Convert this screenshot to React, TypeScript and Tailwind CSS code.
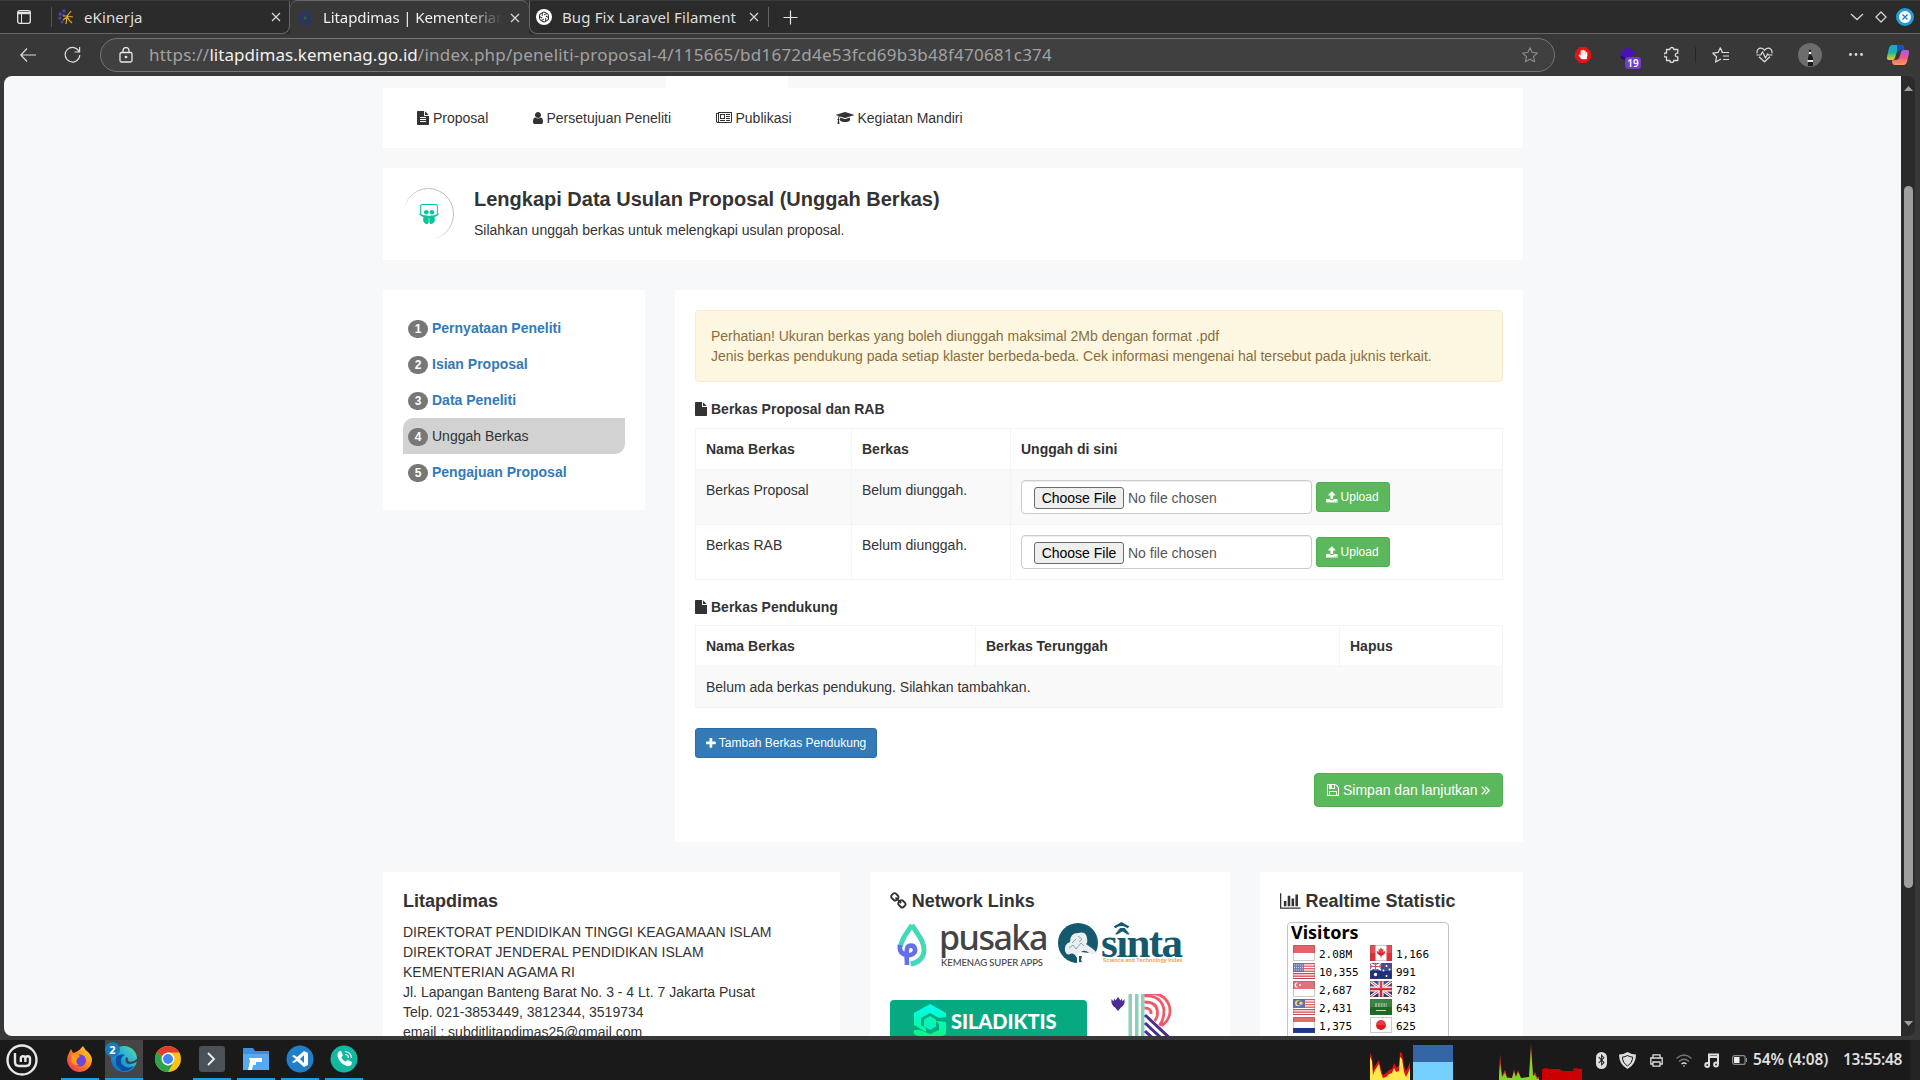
import React from 'react';
import { FaSlideshare, FaHandPaper, FaBluetoothB } from 'react-icons/fa';

type Glyph = { d: string; box: string; w: number };

const GLYPHS: Record<string, Glyph> = {
  fileText: {
    w: 12,
    box: '128 0 1536 1792',
    d: 'M1596 476q14 14 28 36h-472v-472q22 14 36 28zm-476 164h544v1056q0 40-28 68t-68 28h-1344q-40 0-68-28t-28-68v-1600q0-40 28-68t68-28h800v544q0 40 28 68t68 28zm160 736v-64q0-14-9-23t-23-9h-704q-14 0-23 9t-9 23v64q0 14 9 23t23 9h704q14 0 23-9t9-23zm0-256v-64q0-14-9-23t-23-9h-704q-14 0-23 9t-9 23v64q0 14 9 23t23 9h704q14 0 23-9t9-23zm0-256v-64q0-14-9-23t-23-9h-704q-14 0-23 9t-9 23v64q0 14 9 23t23 9h704q14 0 23-9t9-23z',
  },
  file: {
    w: 12,
    box: '128 0 1536 1792',
    d: 'M1152 512v-472q22 14 36 28l408 408q14 14 28 36h-472zm-128 32q0 40 28 68t68 28h544v1056q0 40-28 68t-68 28h-1344q-40 0-68-28t-28-68v-1600q0-40 28-68t68-28h800v544z',
  },
  user: {
    w: 10,
    box: '256 0 1280 1792',
    d: 'M1536 1399q0 109-62.5 187t-150.5 78h-854q-88 0-150.5-78t-62.5-187q0-85 8.5-160.5t31.5-152 58.5-131 94-89 134.5-34.5q131 128 313 128t313-128q76 0 134.5 34.5t94 89 58.5 131 31.5 152 8.5 160.5zm-256-887q0 159-112.5 271.5t-271.5 112.5-271.5-112.5-112.5-271.5 112.5-271.5 271.5-112.5 271.5 112.5 112.5 271.5z',
  },
  news: {
    w: 16,
    box: '0 0 2048 1792',
    d: 'M1024 512h-384v384h384v-384zm128 640v128h-640v-128h640zm0-768v640h-640v-640h640zm640 768v128h-512v-128h512zm0-256v128h-512v-128h512zm0-256v128h-512v-128h512zm0-256v128h-512v-128h512zm-1536 960v-960h-128v960q0 26 19 45t45 19 45-19 19-45zm1664 0v-1088h-1536v1088q0 33-11 64h1483q26 0 45-19t19-45zm128-1216v1216q0 80-56 136t-136 56h-1664q-80 0-136-56t-56-136v-1088h256v-128h1792z',
  },
  cap: {
    w: 18,
    box: '0 0 2304 1792',
    d: 'M1774 836l18 316q4 69-82 128t-235 93.5-323 34.5-323-34.5-235-93.5-82-128l18-316 574 181q22 7 48 7t48-7zm530-324q0 23-22 31l-1120 352q-4 1-10 1t-10-1l-652-206q-43 34-71 111.5t-34 178.5q63 36 63 109 0 69-58 107l58 433q2 14-8 25-9 11-24 11h-192q-15 0-24-11-10-11-8-25l58-433q-58-38-58-107 0-73 65-111 11-207 98-330l-333-104q-22-8-22-31t22-31l1120-352q4-1 10-1t10 1l1120 352q22 8 22 31z',
  },
  upload: {
    w: 13,
    box: '64 0 1664 1792',
    d: 'M1344 1472q0-26-19-45t-45-19-45 19-19 45 19 45 45 19 45-19 19-45zm256 0q0-26-19-45t-45-19-45 19-19 45 19 45 45 19 45-19 19-45zm128-224v320q0 40-28 68t-68 28h-1472q-40 0-68-28t-28-68v-320q0-40 28-68t68-28h427q21 56 70.5 92t110.5 36h256q61 0 110.5-36t70.5-92h427q40 0 68 28t28 68zm-325-648q-17 40-59 40h-256v448q0 26-19 45t-45 19h-256q-26 0-45-19t-19-45v-448h-256q-42 0-59-40-17-39 14-69l448-448q18-19 45-19t45 19l448 448q31 30 14 69z',
  },
  plus: {
    w: 11,
    box: '192 0 1408 1792',
    d: 'M1600 736v192q0 40-28 68t-68 28h-416v416q0 40-28 68t-68 28h-192q-40 0-68-28t-28-68v-416h-416q-40 0-68-28t-28-68v-192q0-40 28-68t68-28h416v-416q0-40 28-68t68-28h192q40 0 68 28t28 68v416h416q40 0 68 28t28 68z',
  },
  floppy: {
    w: 12,
    box: '128 0 1536 1792',
    d: 'M512 1536h768v-384h-768v384zm896 0h128v-896q0-14-10-38.5t-20-34.5l-281-281q-10-10-34-20t-39-10v416q0 40-28 68t-68 28h-576q-40 0-68-28t-28-68v-416h-128v1280h128v-416q0-40 28-68t68-28h832q40 0 68 28t28 68v416zm-384-928v-320q0-13-9.5-22.5t-22.5-9.5h-192q-13 0-22.5 9.5t-9.5 22.5v320q0 13 9.5 22.5t22.5 9.5h192q13 0 22.5-9.5t9.5-22.5zm640 32v928q0 40-28 68t-68 28h-1344q-40 0-68-28t-28-68v-1344q0-40 28-68t68-28h928q40 0 88 20t76 48l280 280q28 28 48 76t20 88z',
  },
  link: {
    w: 13,
    box: '64 0 1664 1792',
    d: 'M1520 1216q0-40-28-68l-208-208q-28-28-68-28-42 0-72 32 3 3 19 18.5t21.5 21.5 15 19 13 25.5 3.5 27.5q0 40-28 68t-68 28q-15 0-27.5-3.5t-25.5-13-19-15-21.5-21.5-18.5-19q-33 31-33 73 0 40 28 68l206 207q27 27 68 27 40 0 68-26l147-146q28-28 28-67zm-703-705q0-40-28-68l-206-207q-28-28-68-28-39 0-68 27l-147 146q-28 28-28 67 0 40 28 68l208 208q27 27 68 27 42 0 72-31-3-3-19-18.5t-21.5-21.5-15-19-13-25.5-3.5-27.5q0-40 28-68t68-28q15 0 27.5 3.5t25.5 13 19 15 21.5 21.5 18.5 19q33-31 33-73zm895 705q0 120-85 203l-147 146q-83 83-203 83-121 0-204-85l-206-207q-83-83-83-203 0-123 88-209l-88-88q-86 88-208 88-120 0-204-84l-208-208q-84-84-84-204t85-203l147-146q83-83 203-83 121 0 204 85l206 207q83 83 83 203 0 123-88 209l88 88q86-88 208-88 120 0 204 84l208 208q84 84 84 204z',
  },
  chart: {
    w: 16,
    box: '0 0 2048 1792',
    d: 'M640 896v512h-256v-512h256zm384-512v1024h-256v-1024h256zm1024 1152v128h-2048v-1536h128v1408h1920zm-640-896v768h-256v-768h256zm384-384v1152h-256v-1152h256z',
  },
};

function Icon({ name, size = 14, className = '' }: { name: string; size?: number; className?: string }) {
  const g = GLYPHS[name];
  return (
    <svg viewBox={g.box} width={(g.w * size) / 14} height={size} fill="currentColor" className={className}>
      <path d={g.d} />
    </svg>
  );
}

function CloseX() {
  return (
    <svg width="10" height="10" viewBox="0 0 10 10" stroke="#d8d8d8" strokeWidth="1.2">
      <path d="M1 1l8 8M9 1l-8 8" />
    </svg>
  );
}

const uiFont = "font-['Noto_Sans',sans-serif]";

function TabStrip() {
  return (
    <div className={`flex h-[34px] border-t border-[#3a3a3a] bg-[#2b2b2b] text-[15px] text-[#dedede] ${uiFont}`}>
      <div className="flex w-[51px] items-center border-b border-[#666] pl-[17px]">
        <svg width="14" height="14" viewBox="0 0 14 14" fill="none" stroke="#e4e4e4" strokeWidth="1.3">
          <rect x=".7" y=".7" width="12.6" height="12.6" rx="2" />
          <path d="M.7 3h12.6" strokeWidth="2.4" />
          <path d="M4.5 4v9" strokeWidth="1" />
        </svg>
      </div>
      <div className="flex w-[239px] items-center rounded-br-lg border-b border-r border-[#666]">
        <div className="h-5 w-px bg-[#555]" />
        <svg className="ml-[6px]" width="16" height="16" viewBox="0 0 16 16">
          <g fill="#4446b0">
            <circle cx="6" cy="2" r="1.8" />
            <circle cx="2.2" cy="5" r="1.8" />
            <circle cx="1.8" cy="9" r="1.6" />
            <circle cx="4" cy="13" r="1.5" />
            <circle cx="5.5" cy="6" r="1.3" />
          </g>
          <path d="M5 7l4 0 4-5M9 7l6 1M9 7l2 4 3 3M9 8l-1 7M9 8l-4 3" stroke="#e3a524" strokeWidth="1.2" fill="none" />
        </svg>
        <span className="ml-[10px] w-[181px] tracking-[0.1px]">eKinerja</span>
        <span className="ml-[6px]"><CloseX /></span>
      </div>
      <div className="flex w-[239px] items-center rounded-t-lg bg-[#383838] pl-[8px] shadow-[0_-1px_0_#666]">
        <svg width="14" height="16" viewBox="0 0 14 16" fill="none" stroke="#23357e" strokeWidth="1.6">
          <path d="M7 1l5.5 4v6L7 15l-5.5-4V5z" strokeDasharray="2 1" />
          <circle cx="7" cy="8" r="3" />
          <circle cx="7" cy="8" r="1.5" fill="#1d6c34" stroke="none" />
        </svg>
        <span className="ml-[11px] w-[179px] overflow-hidden whitespace-nowrap tracking-[-0.1px] text-[#f0f0f0] [mask-image:linear-gradient(to_right,#000_82%,transparent)]">
          Litapdimas | Kementerian
        </span>
        <span className="ml-[8px]"><CloseX /></span>
      </div>
      <div className="flex flex-1 items-center rounded-bl-lg border-b border-l border-[#666]">
        <svg className="ml-[6px]" width="16" height="16" viewBox="0 0 16 16" fill="none" stroke="#222" strokeWidth=".9">
          <circle cx="8" cy="8" r="8" fill="#fff" stroke="none" />
          {[0, 60, 120, 180, 240, 300].map((a) => (
            <path key={a} transform={`rotate(${a} 8 8)`} d="M8 6l2-1.2q2.5-.8 2.5 2.2v2" />
          ))}
        </svg>
        <span className="ml-[10px] w-[177px] whitespace-nowrap tracking-[0.12px]">Bug Fix Laravel Filament</span>
        <span className="ml-[10px]"><CloseX /></span>
        <div className="ml-[9px] h-5 w-px bg-[#666]" />
        <svg className="ml-[14px]" width="15" height="15" viewBox="0 0 15 15" stroke="#e6e6e6" strokeWidth="1.2">
          <path d="M7.5.5v14M.5 7.5h14" />
        </svg>
        <div className="ml-auto flex items-center">
          <svg width="14" height="8" viewBox="0 0 14 8" fill="none" stroke="#d4d4d4" strokeWidth="1.3">
            <path d="M1 1l6 5.5 6-5.5" />
          </svg>
          <svg className="ml-[11px]" width="12" height="12" viewBox="0 0 12 12" fill="none" stroke="#d4d4d4" strokeWidth="1.3">
            <path d="M6 1l5 5-5 5-5-5z" />
          </svg>
          <svg className="mr-[6px] ml-[9px]" width="18" height="18" viewBox="0 0 18 18">
            <circle cx="9" cy="9" r="9" fill="#1f9fdd" />
            <circle cx="9" cy="9" r="6" fill="#fff" />
            <path d="M6.5 6.5l5 5M11.5 6.5l-5 5" stroke="#1f7fbd" strokeWidth="1.4" />
          </svg>
        </div>
      </div>
    </div>
  );
}

function Toolbar() {
  return (
    <div className="flex h-[42px] items-center bg-[#383838] pb-px text-[#dcdcdc]">
      <svg className="ml-[20px]" width="16" height="14" viewBox="0 0 16 14" fill="none" stroke="#dcdcdc" strokeWidth="1.2">
        <path d="M7 .5L.8 7 7 13.5M1 7h15" />
      </svg>
      <svg className="ml-[28px]" width="17" height="17" viewBox="0 0 17 17" fill="none" stroke="#dcdcdc" strokeWidth="1.2">
        <path d="M15.300 6A7.300 7.300 0 1 0 15.800 9M15.600 1v5h-5" />
      </svg>
      <div className="ml-[19px] flex h-[34px] w-[1455px] items-center rounded-full border border-[#757575] bg-[#404040]">
        <svg className="ml-[18px]" width="14" height="16" viewBox="0 0 14 16" fill="none" stroke="#e8e8e8" strokeWidth="1.3">
          <rect x="1" y="5.5" width="12" height="9.5" rx="1.5" />
          <path d="M4 5.500V3.500a3 3 0 0 1 6 0v2" />
          <circle cx="7" cy="10" r=".7" fill="#e8e8e8" />
        </svg>
        <span className={`ml-[16px] whitespace-nowrap text-[17px] tracking-[0.23px] text-[#a2a2a2] ${uiFont}`}>
          https://<span className="tracking-[0.05px] text-[#f0f0f0]">litapdimas.kemenag.go.id</span>
          /index.php/peneliti-proposal-4/115665/bd1672d4e53fcd69b3b48f470681c374
        </span>
        <svg className="mr-[16px] ml-auto" width="16" height="16" viewBox="0 0 16 16" fill="none" stroke="#8c8c8c" strokeWidth="1.1" strokeLinejoin="round">
          <path d="M8 .8l2.200 4.700 5.200.6-3.900 3.500 1.100 5.200L8 12.200l-4.600 2.600 1.100-5.200L.6 6.100l5.200-.6z" />
        </svg>
      </div>
      <svg className="ml-[20px]" width="16" height="16" viewBox="0 0 16 16">
        <path d="M4.700 0h6.600L16 4.700v6.600L11.300 16H4.700L0 11.300V4.700z" fill="#e01414" />
        <FaHandPaper x="3" y="2.500" size={10} color="#fff" />
      </svg>
      <div className="relative ml-[28px] h-6 w-[22px]">
        <svg width="17" height="16" viewBox="0 0 17 16" className="mt-1">
          <path d="M8.500 0L17 6l-8.500 6L0 6z" fill="#4a12b4" />
          <path d="M1.500 8v3l5 3v-3z" fill="#2d0878" />
        </svg>
        <span className={`absolute top-[14px] left-[6px] h-3 w-4 rounded-[3px] bg-[#6f3fc8] text-center text-[10px] leading-3 font-semibold text-white ${uiFont}`}>
          19
        </span>
      </div>
      <svg className="ml-[23px]" width="16" height="17" viewBox="0 0 16 17" fill="none" stroke="#dcdcdc" strokeWidth="1.3">
        <path d="M2.500 3.500h3.300a2 2 0 1 1 4 0h4v3.700a1.900 1.900 0 1 0 0 3.600v3.700h-4a2 2 0 0 1-4 0H2.500v-3.700a2 2 0 1 1 0-3.600z" strokeLinejoin="round" />
      </svg>
      <div className="ml-[15px] h-4 w-px bg-[#262626]" />
      <svg className="ml-[16px]" width="17" height="16" viewBox="0 0 17 16" fill="none" stroke="#dcdcdc" strokeWidth="1.2" strokeLinejoin="round">
        <path d="M10.500 5.400L8.300.8 6.100 5.400.8 6.200l3.700 3.600-.9 5.300L9 12M9.500 5.500H17M11 9h6M11 12.500h6" />
      </svg>
      <svg className="ml-[27px]" width="17" height="16" viewBox="0 0 17 16" fill="none" stroke="#dcdcdc" strokeWidth="1.2" strokeLinejoin="round">
        <path d="M1.200 6.300C.2 3 3 .8 5.200 1.100 7 1.300 8 2.600 8.500 3.300 9 2.600 10 1.300 11.800 1.100c2.200-.3 5 1.900 4 5.200M3 9.800l5.500 5 5.500-5M.5 8h4.200L6.500 4.800l3 6.200L11.500 7l1 1h4" />
      </svg>
      <svg className="ml-[25px]" width="24" height="24" viewBox="0 0 24 24">
        <circle cx="12" cy="12" r="12" fill="#6d6d6d" />
        <path d="M11 7q1-1 2 0v4l2 4v8h-5v-8l1-4z" fill="#1c1c1c" />
        <path d="M9.500 17h5.500v2H9.500z" fill="#e8e8e8" />
        <circle cx="12" cy="10" r="1.2" fill="#fff" />
      </svg>
      <svg className="ml-[27px]" width="14" height="3" viewBox="0 0 14 3" fill="#e0e0e0">
        <circle cx="1.5" cy="1.5" r="1.4" /><circle cx="7" cy="1.5" r="1.4" /><circle cx="12.5" cy="1.5" r="1.4" />
      </svg>
      <svg className="ml-[24px]" width="22" height="20" viewBox="0 0 22 20">
        <defs>
          <linearGradient id="cpA" x1="0" y1="0" x2="0" y2="1"><stop offset="0" stopColor="#1f9bf0" /><stop offset=".5" stopColor="#1fb59a" /><stop offset="1" stopColor="#f2cf1a" /></linearGradient>
          <linearGradient id="cpB" x1="0" y1="0" x2="0" y2="1"><stop offset="0" stopColor="#a45cf0" /><stop offset=".5" stopColor="#f0558c" /><stop offset="1" stopColor="#ff9a55" /></linearGradient>
        </defs>
        <path d="M5 0h9q2.500 0 3 3l-.5 2h-3Q10.500 5 9.500 8l-1.500 5Q7.500 15 5.500 15H2Q-.5 15 0 12L2 3Q3 0 5 0z" fill="url(#cpA)" />
        <path d="M17 20H8q-2.500 0-3-3l.5-2h3q3 0 4-3L14 7Q14.500 5 16.500 5H20q2.500 0 2 3l-2 9q-1 3-3 3z" fill="url(#cpB)" />
        <path d="M10 0h4q2.500 0 3 3l.5 2h-4Q11 5 10 7z" fill="#1a50c0" />
      </svg>
    </div>
  );
}

const NAV: { icon: string; label: string; w: string }[] = [
  { icon: 'fileText', label: 'Proposal', w: 'w-[115.5px]' },
  { icon: 'user', label: 'Persetujuan Peneliti', w: 'w-[183px]' },
  { icon: 'news', label: 'Publikasi', w: 'w-[120px]' },
  { icon: 'cap', label: 'Kegiatan Mandiri', w: 'w-[140px]' },
];

const STEPS = ['Pernyataan Peneliti', 'Isian Proposal', 'Data Peneliti', 'Unggah Berkas', 'Pengajuan Proposal'];

function Steps() {
  return (
    <div className="h-[220px] w-[262px] bg-white p-5">
      {STEPS.map((s, i) => (
        <div
          key={s}
          className={
            i === 3
              ? 'flex h-9 items-center rounded-tl-[10px] rounded-br-[10px] bg-[#d2d2d2] pl-[5px]'
              : 'flex h-9 items-center pl-[5px] font-bold text-[#337ab7]'
          }
        >
          <span className="mt-[2px] h-[18px] w-5 rounded-[10px] bg-[#777] text-center text-[12px] leading-[18px] font-bold text-white">
            {i + 1}
          </span>
          <span className="ml-1">{s}</span>
        </div>
      ))}
    </div>
  );
}

const cell = 'border border-[#f4f4f4] p-[10px] text-left align-top';

function UploadRow({ name, shade }: { name: string; shade?: boolean }) {
  return (
    <tr className={shade ? 'bg-[#f9f9f9]' : ''}>
      <td className={cell}>{name}</td>
      <td className={cell}>Belum diunggah.</td>
      <td className={cell}>
        <div className="flex items-center gap-1">
          <div className="flex h-[34px] w-[291px] items-center rounded border border-[#ccc] bg-white pt-px pl-3 text-[#555] shadow-[inset_0_1px_1px_rgba(0,0,0,.075)]">
            <span className="h-[22px] w-[90px] rounded-[3px] border border-[#6b6b6b] bg-[#efefef] text-center leading-[21px] whitespace-nowrap text-black">Choose File</span>
            <span className="ml-1">No file chosen</span>
          </div>
          <button className="flex h-[30px] w-[74px] items-center rounded-[3px] border border-[#4cae4c] bg-[#5cb85c] pl-[9px] text-[12px] text-white">
            <Icon name="upload" size={12.5} />
            <span className="ml-[3px]">Upload</span>
          </button>
        </div>
      </td>
    </tr>
  );
}

function UploadPanel() {
  return (
    <div className="h-[552px] w-[848px] bg-white p-5">
      <div className="h-[72px] rounded border border-[#faebcc] bg-[#fdf7e2] px-[15px] pt-[15px] text-[#8a6d3b]">
        <p>Perhatian! Ukuran berkas yang boleh diunggah maksimal 2Mb dengan format .pdf</p>
        <p>Jenis berkas pendukung pada setiap klaster berbeda-beda. Cek informasi mengenai hal tersebut pada juknis terkait.</p>
      </div>
      <h5 className="mt-[17px] flex h-5 items-center font-bold">
        <Icon name="file" className="mr-1" /> Berkas Proposal dan RAB
      </h5>
      <table className="mt-[9px] w-full table-fixed border-collapse">
        <colgroup><col className="w-[156px]" /><col className="w-[159px]" /><col /></colgroup>
        <tbody>
          <tr><th className={cell}>Nama Berkas</th><th className={cell}>Berkas</th><th className={cell}>Unggah di sini</th></tr>
          <UploadRow name="Berkas Proposal" shade />
          <UploadRow name="Berkas RAB" />
        </tbody>
      </table>
      <h5 className="mt-[17px] flex h-5 items-center font-bold">
        <Icon name="file" className="mr-1" /> Berkas Pendukung
      </h5>
      <table className="mt-2 w-full table-fixed border-collapse">
        <colgroup><col className="w-[280px]" /><col className="w-[364px]" /><col /></colgroup>
        <tbody>
          <tr><th className={cell}>Nama Berkas</th><th className={cell}>Berkas Terunggah</th><th className={cell}>Hapus</th></tr>
          <tr className="bg-[#f9f9f9]"><td className={cell} colSpan={3}>Belum ada berkas pendukung. Silahkan tambahkan.</td></tr>
        </tbody>
      </table>
      <button className="mt-5 flex h-[30px] w-[182px] items-center rounded-[3px] border border-[#2e6da4] bg-[#337ab7] pl-[10px] text-[12px] text-white">
        <Icon name="plus" size={12.5} />
        <span className="ml-[3px] whitespace-nowrap">Tambah Berkas Pendukung</span>
      </button>
      <div className="mt-[15px] flex justify-end">
        <button className="flex h-[34px] w-[189px] items-center rounded border border-[#4cae4c] bg-[#5cb85c] pl-3 text-white">
          <Icon name="floppy" />
          <span className="ml-1 whitespace-nowrap">Simpan dan lanjutkan</span>
          <svg className="ml-[3px]" width="9" height="9" viewBox="0 0 9 9" fill="none" stroke="#fff" strokeWidth="1.3">
            <path d="M.8.8l3.700 3.700-3.700 3.700M4.500.8l3.700 3.700-3.700 3.700" />
          </svg>
        </button>
      </div>
    </div>
  );
}

function PusakaLogo() {
  return (
    <div className="flex">
      <svg className="mt-[1px]" width="30" height="46" viewBox="0 0 30 46" fill="none" strokeWidth="5">
        <path d="M15 4C10 12 4 18 3.500 26M15 4c6 10 12 16 12 25 0 8-6 13-13.500 14" stroke="#43d9b8" />
        <path d="M3 24c-1 6 2 9 6 10s10-1 9-6-8-4-8 0c-1 5 0 10 0 16" stroke="#6470ea" strokeWidth="4.600" />
      </svg>
      <div className="ml-[12px] w-[108px] whitespace-nowrap text-[#444]">
        <div className="h-[38px] font-['Noto_Sans',sans-serif] text-[34px] leading-[35px] font-medium tracking-[-1.5px]">pusaka</div>
        <div className="ml-[2px] font-[Lato,sans-serif] text-[9.5px] leading-[10px] font-medium tracking-[-0.1px]">KEMENAG SUPER APPS</div>
      </div>
    </div>
  );
}

function SintaLogo() {
  return (
    <div className="mt-px flex">
      <svg className="mt-[2px]" width="40" height="40" viewBox="0 0 40 40">
        <circle cx="20" cy="20" r="20" fill="#15596e" />
        <path d="M7 28q-1-7 5-9 0-9 8-9 8-2 9 5 1 5-1 6l7 5q5 4 4 6l-8-2q-4-4-8-1l-4 6q-3-6-7-4-3 2-5-3z" fill="#e9eff1" />
        <path d="M11 25l4-3 3 4 5-6 3 3M20 13l4 3-3 3M14 20l4-4" stroke="#7da0ac" fill="none" strokeWidth=".9" />
        <path d="M19 33q0-3 4-4l16 2q-4 9-18 9h-2z" fill="#fff" />
        <path d="M21 33v6h3l-1-2 1-4z" fill="#15596e" />
      </svg>
      <div className="relative ml-[3px] w-[84px] whitespace-nowrap">
        <svg className="absolute top-[1px] left-[12px]" width="17" height="7" viewBox="0 0 18 8" fill="#15596e">
          <path d="M9 0l9 5-2 2q-7-5-14 0L0 5z" />
        </svg>
        <div className="h-[36px] font-['Liberation_Serif',serif] text-[43px] leading-[44px] font-bold tracking-[-1.6px] text-[#15596e]">sînta</div>
        <div className="ml-[2px] font-[Inter,sans-serif] text-[5.4px] leading-[6px] font-semibold text-[#f7964a]">Science and Technology Index</div>
      </div>
    </div>
  );
}

function Siladiktis() {
  return (
    <div className="mt-[29px] flex h-[60px] w-[197px] rounded bg-[#07aa80] pl-[24px]">
      <svg className="mt-1" width="32" height="40" viewBox="0 0 32 40">
        <defs>
          <linearGradient id="silG" x1="0" y1="0" x2="0" y2="1"><stop offset="0" stopColor="#00fff7" /><stop offset="1" stopColor="#0cf56b" /></linearGradient>
        </defs>
        <path d="M16 0l16 9v4l-7 1-9-5-9 5v7l5 3v4L0 21V9zM32 18v12l-16 9L0 30v-4h6l10 4 9-4v-6l-3-3z" fill="url(#silG)" />
        <path d="M16 12l6 3.500v7L16 26l-6-3.500v-7z" fill="#06f5b4" />
      </svg>
      <span className="mt-[9px] ml-[5px] font-[Lato,sans-serif] text-[20px] leading-[24px] font-black tracking-[-0.05px] text-white">SILADIKTIS</span>
    </div>
  );
}

function RLogo() {
  return (
    <svg className="mt-[23px] ml-[23px]" width="64" height="60" viewBox="0 0 64 60">
      <path d="M8 3l2.500 3.500L12 4.500l.5 3 2-2.500q1 6-4 9L8 17l-2.500-3q-5-3-4-9l2 2.500.5-3 1.500 2z" fill="#4a2d94" />
      <g fill="#8bd0b8"><path d="M18.500 0H22v60h-3.500zM25 0h3.500v60H25zM31 0h3.500v60H31z" /></g>
      <g fill="none" stroke="#f05a6a" strokeWidth="2.800">
        <path d="M34.500 2a17 17 0 0 1 17 29.500M34.500 2q17-1 19.500 14 0 10-4.500 15.500M34.500 8q13 0 13 11 0 5-3 8M34.500 14q7 0 6.500 6" />
      </g>
      <g stroke="#4a2d94" strokeWidth="3"><path d="M35 21l30 28M35 29l28 26M35 37l24 22" /></g>
    </svg>
  );
}

const FLAG_ART: Record<string, React.ReactNode> = {
  id: <><rect width="22" height="16" fill="#fdfdfd" /><rect width="22" height="8" fill="#e2474e" /></>,
  us: (
    <><rect width="22" height="16" fill="#fff" />{[0, 2.5, 5, 7.5, 10, 12.5, 15].map((y) => <rect key={y} y={y} width="22" height="1.3" fill="#e04050" />)}
      <rect width="11" height="9" fill="#5c6ca8" /><path d="M1 2h9M1 4.500h9M1 7h9" stroke="#cfd6ec" strokeDasharray="1 1" strokeWidth=".9" /></>
  ),
  sg: <><rect width="22" height="16" fill="#fdfdfd" /><rect width="22" height="8" fill="#dc5a60" /><circle cx="4" cy="4" r="2.5" fill="#fff" /><circle cx="5.2" cy="4" r="2.2" fill="#dc5a60" /><circle cx="7" cy="4" r="1" fill="#fff" /></>,
  my: (
    <><rect width="22" height="16" fill="#fff" />{[0, 2.5, 5, 7.5, 10, 12.5, 15].map((y) => <rect key={y} y={y} width="22" height="1.3" fill="#dd4a50" />)}
      <rect width="12" height="8.5" fill="#3f5da0" /><circle cx="5" cy="4.2" r="3" fill="#f4d94e" /><circle cx="6.2" cy="4.2" r="2.4" fill="#3f5da0" /><circle cx="8" cy="4.2" r="1.6" fill="#f4d94e" /></>
  ),
  nl: <><rect width="22" height="16" fill="#fdfdfd" /><rect width="22" height="5" fill="#e0545a" /><rect y="11" width="22" height="5" fill="#15398e" /></>,
  ca: <><rect width="22" height="16" fill="#fff" /><rect width="5.5" height="16" fill="#df3038" /><rect x="16.5" width="5.5" height="16" fill="#df3038" /><path d="M11 2.500l1.200 2 1.300-.5-.3 2.700 2.300-.8-.7 2.500-2.800 2.400H11.400v2h-.8v-2H10L7.200 8.400 6.500 5.900l2.300.8L8.500 4l1.300.5z" fill="#df2028" /></>,
  au: <><rect width="22" height="16" fill="#20307c" /><path d="M0 0l11 7M11 0L0 7M5.500 0v7M0 3.500h11" stroke="#fff" strokeWidth="1.8" /><path d="M5.500 0v7M0 3.500h11" stroke="#d8303a" strokeWidth="1" /><g fill="#fff"><circle cx="5.5" cy="11.5" r="1.7" /><circle cx="16.5" cy="3" r="1" /><circle cx="16.5" cy="13" r="1" /><circle cx="13.5" cy="7.5" r="1" /><circle cx="19.5" cy="6.5" r="1" /></g></>,
  gb: <><rect width="22" height="16" fill="#24347e" /><path d="M0 0l22 16M22 0L0 16" stroke="#fff" strokeWidth="3" /><path d="M0 0l22 16M22 0L0 16" stroke="#d8303a" strokeWidth="1" /><path d="M11 0v16M0 8h22" stroke="#fff" strokeWidth="5" /><path d="M11 0v16M0 8h22" stroke="#d8202a" strokeWidth="2.6" /></>,
  sa: <><rect width="22" height="16" fill="#1d6b22" /><path d="M5 5h12M5 7h12" stroke="#cfe2d0" strokeDasharray="2 .8" strokeWidth="1.2" /><path d="M6 11.500h10" stroke="#dfeadf" strokeWidth=".9" /></>,
  jp: <><rect width="22" height="16" fill="#fdfdfd" /><circle cx="11" cy="8" r="5" fill="#e21820" /></>,
};

const VISITORS: [string, string, string, string][] = [
  ['id', '2.08M', 'ca', '1,166'],
  ['us', '10,355', 'au', '991'],
  ['sg', '2,687', 'gb', '782'],
  ['my', '2,431', 'sa', '643'],
  ['nl', '1,375', 'jp', '625'],
];

function Flag({ code }: { code: string }) {
  return (
    <svg width="22" height="16" viewBox="0 0 22 16">
      {FLAG_ART[code]}
      <rect width="22" height="8" fill="#fff" opacity=".15" />
      <rect x=".5" y=".5" width="21" height="15" fill="none" stroke="#555" opacity=".3" />
    </svg>
  );
}

function Visitors() {
  return (
    <div className="ml-[7px] h-[140px] w-[162px] rounded-t border border-[#c4c4c4] bg-white text-black">
      <div className="mt-[-2px] mb-px ml-[3px] h-[23px] font-['Noto_Sans',sans-serif] text-[18px] leading-[23px] font-bold">Visitors</div>
      <div className="ml-[5px] font-['DejaVu_Sans_Mono',monospace] text-[11px] leading-4">
        {VISITORS.map(([a, x, b, y]) => (
          <div key={a} className="mb-[2px] flex h-4">
            <Flag code={a} />
            <span className="mt-[2px] ml-[4px] w-[51px]">{x}</span>
            <Flag code={b} />
            <span className="mt-[2px] ml-[4px]">{y}</span>
          </div>
        ))}
      </div>
    </div>
  );
}

function Footer() {
  return (
    <div className="mt-[30px] flex gap-[30px]">
      <div className="h-[200px] w-[457px] bg-white px-5 pt-[19px]">
        <h4 className="text-[18px] leading-5 font-bold">Litapdimas</h4>
        <div className="mt-[11px] whitespace-nowrap">
          <p>DIREKTORAT PENDIDIKAN TINGGI KEAGAMAAN ISLAM</p>
          <p>DIREKTORAT JENDERAL PENDIDIKAN ISLAM</p>
          <p>KEMENTERIAN AGAMA RI</p>
          <p>Jl. Lapangan Banteng Barat No. 3 - 4 Lt. 7 Jakarta Pusat</p>
          <p>Telp. 021-3853449, 3812344, 3519734</p>
          <p>email : subditlitapdimas25@gmail.com</p>
        </div>
      </div>
      <div className="h-[200px] w-[360px] bg-white px-5 pt-[19px]">
        <h4 className="flex items-center text-[18px] leading-5 font-bold"><Icon name="link" size={18} className="mr-[5px]" />Network Links</h4>
        <div className="mt-[9px] flex h-[51px] pl-[7px]">
          <PusakaLogo />
          <div className="ml-[11px]"><SintaLogo /></div>
        </div>
        <div className="flex">
          <Siladiktis />
          <RLogo />
        </div>
      </div>
      <div className="h-[200px] w-[263px] bg-white px-5 pt-[19px]">
        <h4 className="flex items-center text-[18px] leading-5 font-bold"><Icon name="chart" size={18} className="mr-[5px]" />Realtime Statistic</h4>
        <div className="mt-[11px]"><Visitors /></div>
      </div>
    </div>
  );
}

function Page() {
  return (
    <div className="flex-1 overflow-hidden rounded-l-lg bg-[#f6f8fa] pl-[379px] font-['Liberation_Sans',Arial,sans-serif] text-[14px] leading-5 text-[#333]">
      <div className="w-[1140px]">
        <div className="ml-[283px] h-3 w-[122px] bg-white" />
        <nav className="flex h-[60px] items-center bg-white pl-[34px]">
          {NAV.map((n) => (
            <div key={n.label} className={`flex items-center whitespace-nowrap ${n.w}`}>
              <Icon name={n.icon} className="mr-1 shrink-0" />
              {n.label}
            </div>
          ))}
        </nav>
        <div className="mt-5 flex h-[92px] bg-white pt-5 pl-5">
          <div className="relative flex h-[52px] w-[51px] items-center justify-center">
            <svg className="absolute inset-0" width="51" height="52" viewBox="0 0 51 52" fill="none">
              <defs>
                <linearGradient id="ringG" x1=".75" y1=".2" x2=".15" y2=".8"><stop offset="0" stopColor="#bdbdbd" /><stop offset=".45" stopColor="#ccc" /><stop offset=".8" stopColor="#fff" /></linearGradient>
              </defs>
              <ellipse cx="25.5" cy="26" rx="25" ry="25.5" stroke="url(#ringG)" />
            </svg>
            <FaSlideshare size={20} color="#0cc49b" />
          </div>
          <div className="ml-[20px]">
            <h3 className="text-[20px] leading-[22px] font-bold">Lengkapi Data Usulan Proposal (Unggah Berkas)</h3>
            <p className="mt-[10px]">Silahkan unggah berkas untuk melengkapi usulan proposal.</p>
          </div>
        </div>
        <div className="mt-[30px] flex gap-[30px]">
          <Steps />
          <UploadPanel />
        </div>
        <Footer />
      </div>
    </div>
  );
}

function Scrollbar() {
  return (
    <div className="mr-[5px] flex w-[14px] flex-col items-center rounded-r-lg bg-[#2b2b2b]">
      <svg className="mt-[10px]" width="9" height="5" viewBox="0 0 9 5" fill="#a0a0a0"><path d="M4.500 0L9 5H0z" /></svg>
      <div className="mt-[95px] h-[702px] w-[9px] rounded-full bg-[#9f9f9f]" />
      <svg className="mt-auto mb-[10px]" width="9" height="5" viewBox="0 0 9 5" fill="#a0a0a0"><path d="M0 0h9L4.500 5z" /></svg>
    </div>
  );
}

function Launcher({ children, open, active }: { children: React.ReactNode; open?: boolean; active?: boolean }) {
  return (
    <div className="flex h-10 w-[44px] justify-center">
      <div className={`relative flex h-10 w-[38px] items-center justify-center border-b-2 ${open ? 'border-[#1f9ede]' : 'border-transparent'} ${active ? 'bg-[#454545]' : ''}`}>
        {children}
      </div>
    </div>
  );
}

function Taskbar() {
  return (
    <div className="flex h-10 items-center bg-[#1a1a1a]">
      <svg className="ml-[6px]" width="32" height="32" viewBox="0 0 32 32" fill="none" stroke="#e8e8e8">
        <circle cx="16" cy="16" r="14.5" strokeWidth="2.4" />
        <path d="M9 9v9q0 4 4 4h7q4 0 4-4v-3.500a2.300 2.300 0 0 0-4.600 0V18M19.400 14.500a2.300 2.300 0 0 0-4.600 0V18" strokeWidth="2.4" />
      </svg>
      <div className="ml-[20px] flex">
        <Launcher open>
          <svg width="28" height="28" viewBox="0 0 28 28">
            <defs><linearGradient id="ffG" x1="1" y1="0" x2="0" y2="1"><stop offset="0" stopColor="#ffe040" /><stop offset=".45" stopColor="#ff8a1c" /><stop offset="1" stopColor="#f0285a" /></linearGradient></defs>
            <path d="M14 27A12.500 12.500 0 0 1 3 8l2-4 2 4 3-1q4-2 7-6 2 4 5 6 4 4 4 8a12.500 12.500 0 0 1-12 12z" fill="url(#ffG)" />
            <circle cx="14" cy="15.5" r="6" fill="#7046d8" />
            <path d="M6 10q5-2 8 1l-3 3q-2 4 2 6-6 1-8-4z" fill="#ff9a20" />
          </svg>
        </Launcher>
        <Launcher open active>
          <svg width="28" height="28" viewBox="0 0 28 28">
            <defs><linearGradient id="edG" x1="0" y1="1" x2="1" y2="0"><stop offset="0" stopColor="#0b5cb8" /><stop offset=".5" stopColor="#22a8e0" /><stop offset="1" stopColor="#5ce0a0" /></linearGradient></defs>
            <circle cx="14" cy="14" r="13" fill="url(#edG)" />
            <path d="M11 18q-1-6 4-8-5-2-9 2-2 9 6 14 8 1 12-5-8 4-13-3z" fill="#0d4f9e" />
            <path d="M16 12q3 1 2 4 4 2 9-2l1 2q-5 4-10 3-4-2-2-7z" fill="#454545" />
          </svg>
          <span className={`absolute top-[2px] left-0 size-[15px] rounded-full bg-[#1b78b8] text-center text-[11px] leading-[15px] font-bold text-white ${uiFont}`}>2</span>
        </Launcher>
        <Launcher>
          <svg width="28" height="28" viewBox="0 0 28 28">
            <circle cx="14" cy="14" r="13" fill="#fbc116" />
            <path d="M14 14L2.700 7.500A13 13 0 0 1 25.300 7.500H14z" fill="#e33b2e" />
            <path d="M14 14L2.700 7.500A13 13 0 0 0 14 27l5.600-9.800z" fill="#2da24c" />
            <circle cx="14" cy="14" r="6.5" fill="#fff" /><circle cx="14" cy="14" r="5" fill="#4285f4" />
          </svg>
        </Launcher>
        <Launcher open>
          <svg width="28" height="28" viewBox="0 0 28 28">
            <rect x="1" y="1" width="26" height="26" rx="3" fill="#4b5257" />
            <path d="M10 8l6 6-6 6" fill="none" stroke="#f0f0f0" strokeWidth="1.8" />
          </svg>
        </Launcher>
        <Launcher open>
          <svg width="28" height="28" viewBox="0 0 28 28">
            <path d="M1 3h10l2 3h14v19H1z" fill="#3f8fe0" /><path d="M1 9h26v16H1z" fill="#5aa8f0" />
            <path d="M7 13h13v4h-6v3h-3l-1 5H6l2-9z" fill="#fff" />
          </svg>
        </Launcher>
        <Launcher open>
          <svg width="28" height="28" viewBox="0 0 28 28">
            <circle cx="14" cy="14" r="13.5" fill="#1f7fc8" />
            <path d="M18 6l4 2v12l-4 2-7-6-3 2-2-1 4-3-4-3 2-1 3 2zm0 4l-4 4 4 4z" fill="#fff" />
          </svg>
        </Launcher>
        <Launcher open>
          <svg width="28" height="28" viewBox="0 0 28 28">
            <circle cx="14" cy="14" r="13.5" fill="#12b8a0" />
            <path d="M9 6.500l2-.5 2 4.500-1.800 2q1.500 3 4.300 4.300l2-1.800 4.500 2-.5 2.500q-1.500 2-4 1.500-8-2-10-10-.5-3 1.500-4.500z" fill="#fff" />
            <path d="M15 6.500q6 .5 6.500 6.500M15 9.500q3.500 0 3.500 3.500" fill="none" stroke="#fff" strokeWidth="1.2" />
          </svg>
        </Launcher>
      </div>
      <div className="ml-auto flex h-10 items-end">
        <svg width="40" height="36" viewBox="0 0 40 36">
          <path d="M0 36V9l2 4 1 14 2-5 2-3 2-3 2 9 2 6 3-2 3-3 3-1 2-6 2 4 3-1 1-14 2 1 2 13 2 5 2-4 2-5v17z" fill="#e01010" />
          <path d="M0 36V13l2 4 1 14 2-5 2-3 2-3 2 9 2 5 3-1 3-3 3-1 2-5 2 4 3-1 1-14 2 2 2 13 2 5 2-4 2-5v16z" fill="#ffe94f" />
        </svg>
        <div className="ml-[3px] flex h-[35px] w-10 flex-col"><div className="h-[17px] bg-[#3465a4]" /><div className="flex-1 bg-[#75d0ff]" /></div>
        <svg className="ml-[46px]" width="40" height="39" viewBox="0 0 40 39">
          <path d="M0 39V33l1-20 2 22 3-6 2 7 5 1 2-9 2 8 2-7 3 8 8-1 2-34 2 33 2-4 2 5h4v3z" fill="#d03020" />
          <path d="M0 39V35l1-12 2 13 3-4 2 5 5 0 2-6 2 5 2-5 3 6 8-1 2-28 2 27 2-1 2 4h4v1z" fill="#80d828" />
        </svg>
        <svg className="ml-[3px]" width="40" height="12" viewBox="0 0 40 12"><path d="M0 12V1l4-1 3 1h10l4 2h10l1-3 8 1v11z" fill="#cc0000" /></svg>
        <div className="flex h-10 items-center text-[#dfdfdf]">
          <span className="ml-[14px] flex h-[17px] w-[11px] items-center justify-center rounded-full bg-[#dfdfdf] text-[#1a1a1a]"><FaBluetoothB size={12} /></span>
          <svg className="ml-[12px]" width="17" height="17" viewBox="0 0 17 17" fill="#dfdfdf">
            <path d="M8.500 0q4 2.500 8.500 2.500 0 10-8.500 14.500Q0 12.500 0 2.500q4.500 0 8.500-2.500z" />
            <path d="M8.500 3.500q2.500 1.500 5.200 1.600-.5 6-5.200 8.900-4.700-2.900-5.200-8.900 2.700-.1 5.200-1.600z" fill="none" stroke="#1a1a1a" />
          </svg>
          <svg className="ml-[14px]" width="13" height="13" viewBox="0 0 13 13" fill="none" stroke="#dfdfdf" strokeWidth="1.3">
            <path d="M3 4V.8h7V4M3 10H.8V4h11.400v6H10M3 8h7v4.200H3z" />
          </svg>
          <svg className="ml-[13px]" width="16" height="13" viewBox="0 0 16 13" fill="none" stroke="#777" strokeWidth="1.3">
            <path d="M.5 4.500q7.500-7 15 0M3 7.500q5-4.500 10 0" /><path d="M5.500 10q2.500-2 5 0" stroke="#ddd" /><circle cx="8" cy="12" r=".8" fill="#ddd" stroke="none" />
          </svg>
          <svg className="ml-[12px]" width="15" height="15" viewBox="0 0 15 15" fill="none" stroke="#dfdfdf" strokeWidth="2">
            <path d="M5 12V1.500h9V11M5 4h9" /><circle cx="3.2" cy="12" r="1.9" /><circle cx="12" cy="11.5" r="1.9" />
          </svg>
          <svg className="ml-[13px]" width="15" height="10" viewBox="0 0 15 10">
            <rect x=".6" y=".6" width="12.5" height="8.8" rx="2" fill="none" stroke="#8a8a8a" strokeWidth="1.2" /><rect x="2" y="2" width="5.5" height="6" fill="#eee" /><path d="M14.500 3v4" stroke="#8a8a8a" />
          </svg>
          <span className={`mb-px ml-[6px] w-[79px] whitespace-nowrap text-[15.5px] font-semibold tracking-[-0.1px] ${uiFont}`}>54% (4:08)</span>
          <span className={`mb-px ml-[11px] w-[62px] whitespace-nowrap text-[15.5px] font-semibold tracking-[-0.35px] ${uiFont}`}>13:55:48</span>
        </div>
        <div className="ml-[5px] h-10 w-[10px] bg-[#232323]" />
      </div>
    </div>
  );
}

export default function App() {
  return (
    <div className="flex h-[1080px] w-[1920px] flex-col overflow-hidden bg-[#383838]">
      <TabStrip />
      <Toolbar />
      <div className="flex h-[960px] pl-1">
        <Page />
        <Scrollbar />
      </div>
      <div className="h-1 bg-[#383838]" />
      <Taskbar />
    </div>
  );
}
